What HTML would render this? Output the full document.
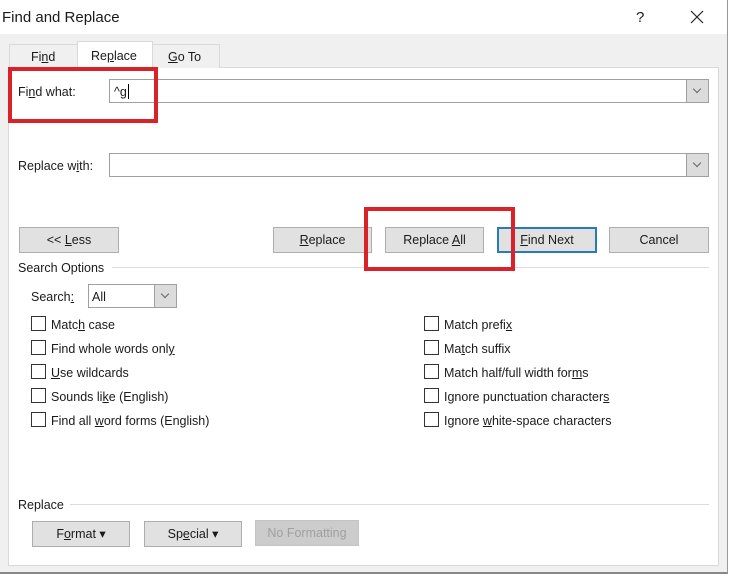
<!DOCTYPE html>
<html><head><style>
*{box-sizing:border-box;margin:0;padding:0}
body{width:733px;height:577px;position:relative;overflow:hidden;background:#fff;font-family:"Liberation Sans",sans-serif;font-size:12.5px;color:#1a1a1a}
.a{position:absolute}
.btn{position:absolute;background:#e1e1e1;border:1px solid #adadad;text-align:center;line-height:25px;height:26px}
.cb{position:absolute;width:15px;height:15px;border:1px solid #333;background:#fff}
.lbl{position:absolute;white-space:nowrap;margin-top:1px}
u{text-decoration:underline}
.line{position:absolute;height:1px;background:#dcdcdc}
.inp{position:absolute;background:#fff;border:1px solid #a0a0a0;height:24px}
.dd{position:absolute;right:0;top:0;width:22px;height:22px;background:#dcdcdc;border-left:1px solid #a0a0a0}
.dd:after{content:"";position:absolute;left:7px;top:6px;width:5px;height:5px;border-right:1px solid #666;border-bottom:1px solid #666;transform:rotate(45deg)}
.red{position:absolute;border:4px solid #d9222a}
</style></head><body>
<div class="a" style="left:0;top:0;width:728px;height:574px;background:#f0f0f0;border-right:1px solid #999;border-bottom:2px solid #888"></div>
<div class="a" style="left:0;top:0;width:727px;height:34px;background:#fff"></div>
<div class="lbl" style="left:2px;top:8px;font-size:15px">Find and Replace</div>
<div class="lbl" style="left:636px;top:8px;font-size:15px">?</div>
<svg class="a" style="left:690px;top:10px" width="14" height="14"><path d="M1 1L13 13M13 1L1 13" stroke="#222" stroke-width="1.2"/></svg>
<div class="a" style="left:8px;top:67px;width:711px;height:499px;background:#fff;border:1px solid #d9d9d9"></div>
<div class="a" style="left:9px;top:44px;width:69px;height:24px;border:1px solid #d9d9d9;border-bottom:none;background:#f0f0f0"></div>
<div class="lbl" style="left:31px;top:49px"><span>Fi<u>n</u>d</span></div>
<div class="a" style="left:77px;top:41px;width:76px;height:28px;border:1px solid #d9d9d9;border-bottom:none;background:#fff"></div>
<div class="lbl" style="left:91px;top:48px">Re<u>p</u>lace</div>
<div class="a" style="left:152px;top:44px;width:68px;height:24px;border:1px solid #d9d9d9;border-bottom:none;background:#f0f0f0"></div>
<div class="lbl" style="left:168px;top:49px"><u>G</u>o To</div>
<div class="lbl" style="left:18px;top:84px">Fi<u>n</u>d what:</div>
<div class="inp" style="left:109px;top:79px;width:600px"><span class="a" style="left:4px;top:5px">^g</span><span class="a" style="left:18px;top:4px;width:1px;height:15px;background:#000"></span><div class="dd"></div></div>
<div class="lbl" style="left:18px;top:158px">Replace w<u>i</u>th:</div>
<div class="inp" style="left:109px;top:153px;width:600px"><div class="dd"></div></div>
<div class="btn" style="left:19px;top:227px;width:100px">&lt;&lt; <u>L</u>ess</div>
<div class="btn" style="left:273px;top:227px;width:99px"><u>R</u>eplace</div>
<div class="btn" style="left:385px;top:227px;width:99px">Replace <u>A</u>ll</div>
<div class="btn" style="left:497px;top:227px;width:100px;border:2px solid #2a7ab8;line-height:23px"><u>F</u>ind Next</div>
<div class="btn" style="left:609px;top:227px;width:100px">Cancel</div>
<div class="lbl" style="left:18px;top:260px">Search Options</div>
<div class="line" style="left:112px;top:267px;width:597px"></div>
<div class="lbl" style="left:31px;top:289px">Search<u>:</u></div>
<div class="inp" style="left:88px;top:284px;width:89px"><span class="a" style="left:3px;top:5px">All</span><div class="dd"></div></div>
<div class="cb" style="left:31px;top:316px"></div><div class="lbl" style="left:51px;top:317px">Matc<u>h</u> case</div>
<div class="cb" style="left:31px;top:340px"></div><div class="lbl" style="left:51px;top:341px">Find whole words onl<u>y</u></div>
<div class="cb" style="left:31px;top:364px"></div><div class="lbl" style="left:51px;top:365px"><u>U</u>se wildcards</div>
<div class="cb" style="left:31px;top:388px"></div><div class="lbl" style="left:51px;top:389px">Sounds li<u>k</u>e (English)</div>
<div class="cb" style="left:31px;top:412px"></div><div class="lbl" style="left:51px;top:413px">Find all <u>w</u>ord forms (English)</div>
<div class="cb" style="left:424px;top:316px"></div><div class="lbl" style="left:444px;top:317px">Match prefi<u>x</u></div>
<div class="cb" style="left:424px;top:340px"></div><div class="lbl" style="left:444px;top:341px">Ma<u>t</u>ch suffix</div>
<div class="cb" style="left:424px;top:364px"></div><div class="lbl" style="left:444px;top:365px">Match half/full width for<u>m</u>s</div>
<div class="cb" style="left:424px;top:388px"></div><div class="lbl" style="left:444px;top:389px">Ignore punctuation character<u>s</u></div>
<div class="cb" style="left:424px;top:412px"></div><div class="lbl" style="left:444px;top:413px">Ignore <u>w</u>hite-space characters</div>
<div class="lbl" style="left:18px;top:497px">Replace</div>
<div class="line" style="left:70px;top:504px;width:639px"></div>
<div class="btn" style="left:32px;top:521px;width:98px">F<u>o</u>rmat &#9662;</div>
<div class="btn" style="left:144px;top:521px;width:98px">Sp<u>e</u>cial &#9662;</div>
<div class="btn" style="left:255px;top:520px;width:104px;background:#cccccc;border-color:#c4c4c4;color:#a0a0a0">No Formatting</div>
<div class="red" style="left:8px;top:67px;width:150px;height:56px"></div>
<div class="red" style="left:364px;top:207px;width:151px;height:64px"></div>
</body></html>
